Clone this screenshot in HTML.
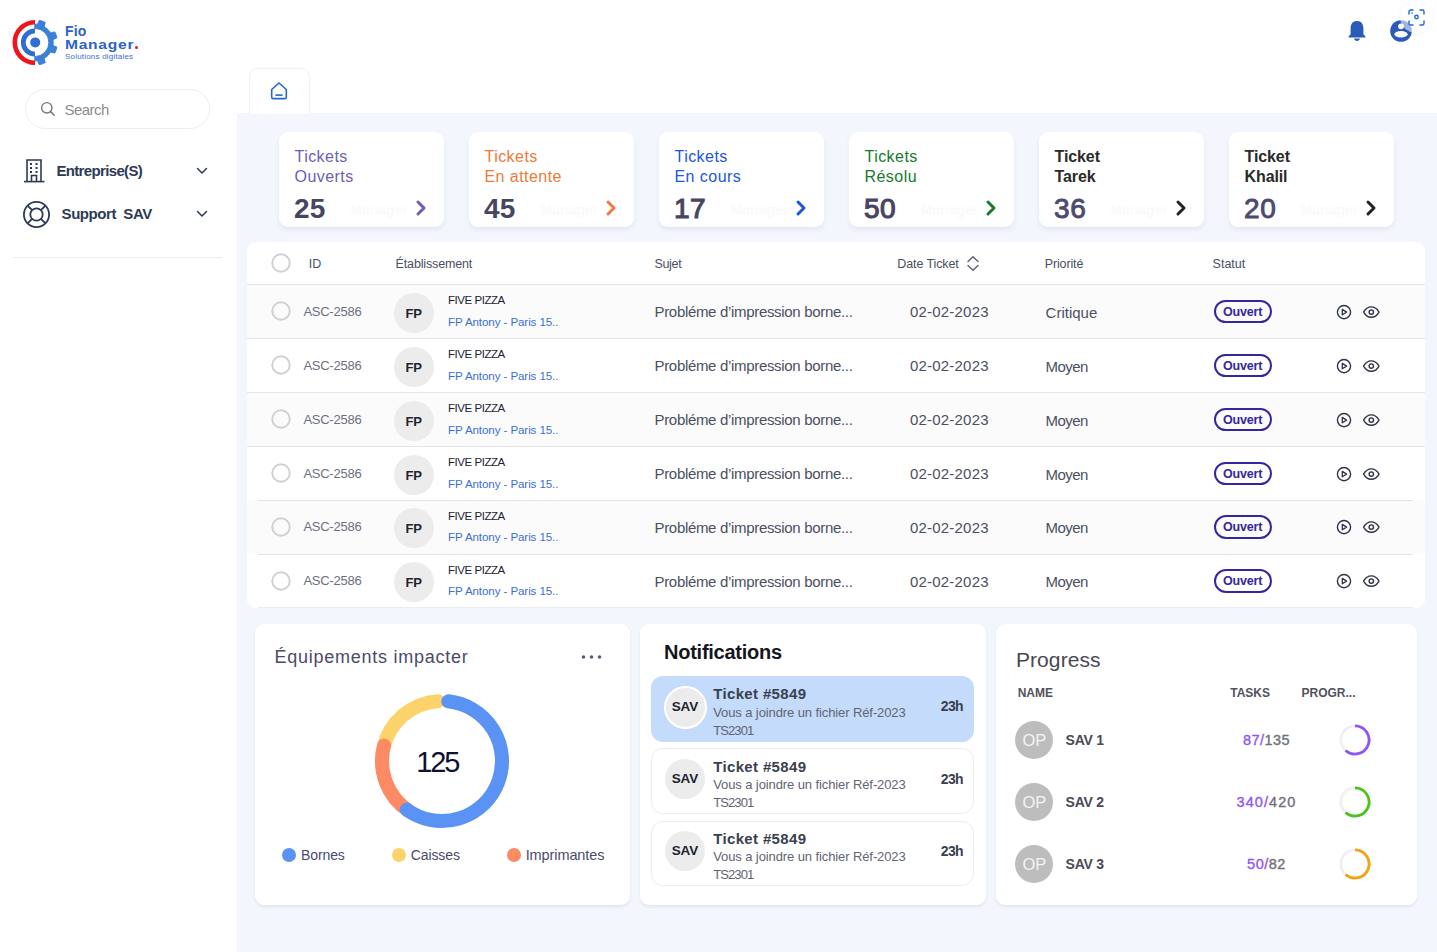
<!DOCTYPE html>
<html><head><meta charset="utf-8">
<style>
*{box-sizing:border-box;margin:0;padding:0}
html,body{width:1437px;height:952px;overflow:hidden;background:#fff;font-family:"Liberation Sans",sans-serif;position:relative}
.a{position:absolute;white-space:nowrap;line-height:1}
.card{position:absolute;background:#fff;border-radius:9px;box-shadow:0 3px 5px rgba(40,50,90,0.07)}
</style></head><body>
<!-- main bg -->
<div class="a" style="left:237px;top:113px;width:1200px;height:839px;background:#f3f6fd"></div>

<!-- SIDEBAR -->
<svg class="a" style="left:0;top:0" width="236" height="80" viewBox="0 0 236 80">
  <!-- red arc -->
  <path d="M35 22.3 A20.2 20.2 0 0 0 35 62.7" fill="none" stroke="#f0141e" stroke-width="4.6"/>
  <!-- inner blue arc -->
  <path d="M35 30.8 A11.7 11.7 0 0 0 35 54.2" fill="none" stroke="#2f6fd1" stroke-width="4.8"/>
  <!-- dot -->
  <circle cx="35.2" cy="42.4" r="5" fill="#2f6fd1"/>
  <!-- gear right half -->
  <path fill="#3c7fd8" stroke="#3c7fd8" stroke-width="1" stroke-linejoin="round" d="M34.80 24.10 L35.35 24.11 L35.89 24.13 L36.44 24.17 L36.98 24.23 L37.52 24.30 L39.31 20.35 L40.33 20.59 L41.34 20.87 L42.34 21.20 L43.33 21.57 L44.29 21.99 L45.24 22.45 L44.14 26.65 L45.67 27.65 L47.09 28.80 L48.39 30.09 L49.55 31.50 L50.57 33.02 L54.75 31.89 L55.23 32.83 L55.65 33.79 L56.04 34.77 L56.37 35.77 L56.66 36.78 L56.91 37.80 L52.97 39.62 L53.12 40.77 L53.19 41.92 L53.19 43.08 L53.12 44.23 L52.97 45.38 L56.91 47.20 L56.66 48.22 L56.37 49.23 L56.04 50.23 L55.65 51.21 L55.23 52.17 L54.75 53.11 L50.57 51.98 L49.55 53.50 L48.39 54.91 L47.09 56.20 L45.67 57.35 L44.14 58.35 L45.24 62.55 L44.29 63.01 L43.33 63.43 L42.34 63.80 L41.34 64.13 L40.33 64.41 L39.31 64.65 L37.52 60.70 L36.98 60.77 L36.44 60.83 L35.89 60.87 L35.35 60.89 L34.80 60.90 L34.80 56.60 A14.1 14.1 0 0 0 34.80 28.40 Z"/>
</svg>
<div class="a" style="left:65px;top:23.6px;font-size:14px;font-weight:700;color:#2b63c6;letter-spacing:0.1px">Fio</div>
<div class="a" style="left:65px;top:38px;font-size:13px;font-weight:700;color:#2b63c6;letter-spacing:0.6px;transform:scaleX(1.2);transform-origin:0 0">Manager</div>
<div class="a" style="left:135px;top:46px;width:3px;height:3px;border-radius:50%;background:#f0141e"></div>
<div class="a" style="left:65px;top:52.5px;font-size:8px;color:#3b6fd0;letter-spacing:0.2px">Solutions digitales</div>

<div class="a" style="left:24.5px;top:89.3px;width:185.5px;height:39.7px;border:1px solid #eeeeee;border-radius:20px"></div>
<svg class="a" style="left:40px;top:101.2px" width="16" height="16" viewBox="0 0 16 16"><circle cx="6.8" cy="6.8" r="5.2" fill="none" stroke="#777" stroke-width="1.4"/><path d="M10.6 10.6 L14.2 14.2" stroke="#777" stroke-width="1.5" stroke-linecap="round"/></svg>
<div class="a" style="left:64.4px;top:102.3px;font-size:15px;color:#8c8c8c;letter-spacing:-0.5px">Search</div>

<svg class="a" style="left:23px;top:158px" width="24" height="25" viewBox="0 0 24 25">
  <g fill="none" stroke="#2d3a55" stroke-width="1.6">
    <path d="M4 23.5 V2 H18 V23.5"/><path d="M1 23.6 H21.5"/>
    <path d="M8.5 23.5 V17.5 H13.5 V23.5"/>
  </g>
  <g fill="#2d3a55"><rect x="7" y="5" width="2" height="2"/><rect x="12.5" y="5" width="2" height="2"/><rect x="7" y="9" width="2" height="2"/><rect x="12.5" y="9" width="2" height="2"/><rect x="7" y="13" width="2" height="2"/><rect x="12.5" y="13" width="2" height="2"/></g>
</svg>
<div class="a" style="left:56.4px;top:163.3px;font-size:15px;font-weight:700;color:#2d3a55;letter-spacing:-0.65px">Entreprise(S)</div>
<svg class="a" style="left:195px;top:165px" width="14" height="12" viewBox="0 0 14 12"><path d="M2.5 3.5 L7 8 L11.5 3.5" fill="none" stroke="#2d3a55" stroke-width="1.5" stroke-linecap="round" stroke-linejoin="round"/></svg>

<svg class="a" style="left:22px;top:199.5px" width="29" height="29" viewBox="0 0 29 29">
  <g fill="none" stroke="#2d3a55" stroke-width="1.8">
    <circle cx="14.5" cy="14.5" r="12.6"/><circle cx="14.5" cy="14.5" r="6.2"/>
    <path d="M5.6 5.6 L10.1 10.1 M23.4 5.6 L18.9 10.1 M5.6 23.4 L10.1 18.9 M23.4 23.4 L18.9 18.9"/>
  </g>
</svg>
<div class="a" style="left:61.6px;top:206.3px;font-size:15px;font-weight:700;color:#2d3a55;letter-spacing:-0.45px">Support&nbsp; SAV</div>
<svg class="a" style="left:195px;top:208px" width="14" height="12" viewBox="0 0 14 12"><path d="M2.5 3.5 L7 8 L11.5 3.5" fill="none" stroke="#2d3a55" stroke-width="1.5" stroke-linecap="round" stroke-linejoin="round"/></svg>
<div class="a" style="left:13px;top:256.5px;width:209px;height:1.2px;background:#ebebeb"></div>

<!-- HEADER ICONS -->
<svg class="a" style="left:1346px;top:19px" width="22" height="24" viewBox="0 0 22 24">
  <path d="M11 2 C6.3 2 4.6 5.6 4.6 9.6 V15.3 L2.6 17.6 V18.6 H19.4 V17.6 L17.4 15.3 V9.6 C17.4 5.6 15.7 2 11 2 Z" fill="#2a5bb8"/>
  <path d="M8 19.6 H14 C13.6 21.2 12.5 22 11 22 C9.5 22 8.4 21.2 8 19.6 Z" fill="#2a5bb8"/>
</svg>
<svg class="a" style="left:1389px;top:19px" width="24" height="24" viewBox="0 0 24 24">
  <circle cx="12" cy="12" r="10.8" fill="#2a5bb8"/>
  <circle cx="12" cy="7.3" r="2.9" fill="#fff"/>
  <ellipse cx="12" cy="15.3" rx="6.6" ry="3.2" fill="#fff"/>
</svg>
<div class="a" style="left:1400px;top:1px;width:32px;height:32px;border-radius:50%;background:rgba(255,255,255,0.55);box-shadow:0 1px 4px rgba(0,0,0,0.06)"></div>
<svg class="a" style="left:1408px;top:8.5px" width="17" height="17" viewBox="0 0 17 17">
  <g fill="none" stroke="#1f6ad1" stroke-width="1.4" stroke-linecap="round">
    <path d="M1 5 V2.6 C1 1.7 1.7 1 2.6 1 H5 M12 1 H14.4 C15.3 1 16 1.7 16 2.6 V5 M16 12 V14.4 C16 15.3 15.3 16 14.4 16 H12 M5 16 H2.6 C1.7 16 1 15.3 1 14.4 V12"/>
    <circle cx="8.5" cy="8" r="1.7"/>
  </g>
  <circle cx="4.1" cy="4.1" r="0.8" fill="#1f6ad1"/>
</svg>

<!-- HOME TAB -->
<div class="a" style="left:248.5px;top:67.5px;width:61px;height:46px;background:#fff;border:1px solid #f2f2f2;border-bottom:none;border-radius:9px 9px 0 0;box-shadow:0 -1px 2px rgba(0,0,0,0.025)"></div>
<svg class="a" style="left:270px;top:81px" width="18" height="19" viewBox="0 0 18 19">
  <path d="M1.7 8.5 L9 2 L16.3 8.5 V16.2 C16.3 17 15.7 17.6 14.9 17.6 H3.1 C2.3 17.6 1.7 17 1.7 16.2 Z" fill="none" stroke="#2566cf" stroke-width="1.6" stroke-linejoin="round"/>
  <path d="M5.4 14.1 H12.6" stroke="#2566cf" stroke-width="1.6"/>
</svg>

<!--CARDS-->
<div class="card" style="left:278.5px;top:132px;width:165px;height:95px"></div>
<div class="a" style="left:294.5px;top:146.6px;font-size:16px;color:#6b5fb8;line-height:20px;letter-spacing:0.45px;">Tickets<br>Ouverts</div>
<div class="a" style="left:350.5px;top:203px;font-size:14px;font-weight:700;color:#fafafc">Manager</div>
<div class="a" style="left:294.0px;top:194.7px;font-size:28px;font-weight:700;color:#464562;letter-spacing:0.3px">25</div>
<svg class="a" style="left:413.5px;top:199px" width="15" height="18" viewBox="0 0 15 18"><path d="M4 3 L10 9 L4 15" fill="none" stroke="#6b5fb8" stroke-width="3" stroke-linecap="round" stroke-linejoin="round"/></svg>
<div class="card" style="left:468.5px;top:132px;width:165px;height:95px"></div>
<div class="a" style="left:484.5px;top:146.6px;font-size:16px;color:#f07a3a;line-height:20px;letter-spacing:0.45px;">Tickets<br>En attente</div>
<div class="a" style="left:540.5px;top:203px;font-size:14px;font-weight:700;color:#fafafc">Manager</div>
<div class="a" style="left:484.0px;top:194.7px;font-size:28px;font-weight:700;color:#464562;letter-spacing:0.3px">45</div>
<svg class="a" style="left:603.5px;top:199px" width="15" height="18" viewBox="0 0 15 18"><path d="M4 3 L10 9 L4 15" fill="none" stroke="#f07a3a" stroke-width="3" stroke-linecap="round" stroke-linejoin="round"/></svg>
<div class="card" style="left:658.5px;top:132px;width:165px;height:95px"></div>
<div class="a" style="left:674.5px;top:146.6px;font-size:16px;color:#1d55e0;line-height:20px;letter-spacing:0.45px;">Tickets<br>En cours</div>
<div class="a" style="left:730.5px;top:203px;font-size:14px;font-weight:700;color:#fafafc">Manager</div>
<div class="a" style="left:674.0px;top:194.7px;font-size:28px;font-weight:400;-webkit-text-stroke:1.1px #464562;color:#464562;letter-spacing:0.4px">17</div>
<svg class="a" style="left:793.5px;top:199px" width="15" height="18" viewBox="0 0 15 18"><path d="M4 3 L10 9 L4 15" fill="none" stroke="#1d55e0" stroke-width="3" stroke-linecap="round" stroke-linejoin="round"/></svg>
<div class="card" style="left:848.5px;top:132px;width:165px;height:95px"></div>
<div class="a" style="left:864.5px;top:146.6px;font-size:16px;color:#157a2c;line-height:20px;letter-spacing:0.45px;">Tickets<br>Résolu</div>
<div class="a" style="left:920.5px;top:203px;font-size:14px;font-weight:700;color:#fafafc">Manager</div>
<div class="a" style="left:864.0px;top:194.7px;font-size:28px;font-weight:400;-webkit-text-stroke:1.1px #464562;color:#464562;letter-spacing:0.4px">50</div>
<svg class="a" style="left:983.5px;top:199px" width="15" height="18" viewBox="0 0 15 18"><path d="M4 3 L10 9 L4 15" fill="none" stroke="#157a2c" stroke-width="3" stroke-linecap="round" stroke-linejoin="round"/></svg>
<div class="card" style="left:1038.5px;top:132px;width:165px;height:95px"></div>
<div class="a" style="left:1054.5px;top:146.6px;font-size:16px;color:#2a2a2a;line-height:20px;font-weight:700;letter-spacing:-0.1px;">Ticket<br>Tarek</div>
<div class="a" style="left:1110.5px;top:203px;font-size:14px;font-weight:700;color:#fafafc">Manager</div>
<div class="a" style="left:1054.0px;top:194.7px;font-size:28px;font-weight:400;-webkit-text-stroke:0.9px #4c4a72;color:#4c4a72;letter-spacing:0.6px">36</div>
<svg class="a" style="left:1173.5px;top:199px" width="15" height="18" viewBox="0 0 15 18"><path d="M4 3 L10 9 L4 15" fill="none" stroke="#222" stroke-width="3" stroke-linecap="round" stroke-linejoin="round"/></svg>
<div class="card" style="left:1228.5px;top:132px;width:165px;height:95px"></div>
<div class="a" style="left:1244.5px;top:146.6px;font-size:16px;color:#2a2a2a;line-height:20px;font-weight:700;letter-spacing:-0.1px;">Ticket<br>Khalil</div>
<div class="a" style="left:1300.5px;top:203px;font-size:14px;font-weight:700;color:#fafafc">Manager</div>
<div class="a" style="left:1244.0px;top:194.7px;font-size:28px;font-weight:400;-webkit-text-stroke:0.9px #4c4a72;color:#4c4a72;letter-spacing:0.6px">20</div>
<svg class="a" style="left:1363.5px;top:199px" width="15" height="18" viewBox="0 0 15 18"><path d="M4 3 L10 9 L4 15" fill="none" stroke="#222" stroke-width="3" stroke-linecap="round" stroke-linejoin="round"/></svg>
<div class="a" style="left:247px;top:242px;width:1178px;height:366px;background:#fff;border-radius:9px;overflow:hidden">
<div class="a" style="left:0;top:43px;width:1178px;height:53.5px;background:#fbfbfc"></div>
<div class="a" style="left:0;top:96.5px;width:1178px;height:54.0px;background:#fff"></div>
<div class="a" style="left:0;top:150.5px;width:1178px;height:54.0px;background:#fbfbfc"></div>
<div class="a" style="left:0;top:204.5px;width:1178px;height:53.5px;background:#fff"></div>
<div class="a" style="left:0;top:258px;width:1178px;height:54px;background:#fbfbfc"></div>
<div class="a" style="left:0;top:312px;width:1178px;height:54px;background:#fff"></div>
<div class="a" style="left:0;top:42.0px;width:1178px;height:1px;background:#e4e5ec"></div>
<div class="a" style="left:0;top:95.69999999999999px;width:1178px;height:1px;background:#e4e5ec"></div>
<div class="a" style="left:0;top:150.0px;width:1178px;height:1px;background:#e4e5ec"></div>
<div class="a" style="left:0;top:203.89999999999998px;width:1178px;height:1px;background:#e4e5ec"></div>
<div class="a" style="left:11px;top:257.7px;width:1155px;height:1px;background:#e4e5ec"></div>
<div class="a" style="left:11px;top:311.70000000000005px;width:1155px;height:1px;background:#e4e5ec"></div>
<div class="a" style="left:11px;top:364.5px;width:1155px;height:1px;background:#ebebf0"></div>
</div>
<svg class="a" style="left:269px;top:251px" width="24" height="24" viewBox="0 0 24 24"><circle cx="12" cy="12" r="8.75" fill="none" stroke="#cfd0d4" stroke-width="1.9"/></svg>
<div class="a" style="left:308.75px;top:258.42px;font-size:12.5px;color:#4a4f63;">ID</div>
<div class="a" style="left:395.6px;top:258.42px;font-size:12.5px;color:#4a4f63;letter-spacing:-0.15px">Établissement</div>
<div class="a" style="left:654.4px;top:258.42px;font-size:12.5px;color:#4a4f63;letter-spacing:-0.3px">Sujet</div>
<div class="a" style="left:897.3px;top:258.42px;font-size:12.5px;color:#4a4f63;letter-spacing:-0.1px">Date Ticket</div>
<svg class="a" style="left:965px;top:255px" width="16" height="17" viewBox="0 0 16 17"><path d="M3 6.5 L8 1.8 L13 6.5 M3 10.5 L8 15.2 L13 10.5" fill="none" stroke="#5a5f73" stroke-width="1.4" stroke-linecap="round" stroke-linejoin="round"/></svg>
<div class="a" style="left:1044.8px;top:258.42px;font-size:12.5px;color:#4a4f63;letter-spacing:-0.15px">Priorité</div>
<div class="a" style="left:1212.6px;top:258.42px;font-size:12.5px;color:#4a4f63;">Statut</div>
<svg class="a" style="left:269px;top:299.3px" width="24" height="24" viewBox="0 0 24 24"><circle cx="12" cy="12" r="8.75" fill="none" stroke="#cfd0d4" stroke-width="1.9"/></svg>
<div class="a" style="left:303.4px;top:304.99px;font-size:13px;color:#6b7080;letter-spacing:-0.25px">ASC-2586</div>
<div class="a" style="left:393.8px;top:292.8px;width:40px;height:40px;border-radius:50%;background:#ececec"></div>
<div class="a" style="left:405.4px;top:306.99px;font-size:13px;color:#1f2230;font-weight:700">FP</div>
<div class="a" style="left:448px;top:295.36px;font-size:11.5px;color:#1f2230;letter-spacing:-0.45px">FIVE PIZZA</div>
<div class="a" style="left:448px;top:315.68px;font-size:11.6px;color:#3b6fd6;letter-spacing:-0.1px">FP Antony - Paris 15..</div>
<div class="a" style="left:654.5px;top:304.30px;font-size:15px;color:#4b5060;letter-spacing:-0.32px">Probléme d’impression borne...</div>
<div class="a" style="left:910px;top:304.30px;font-size:15px;color:#4b5060;letter-spacing:0.2px">02-02-2023</div>
<div class="a" style="left:1045.6px;top:304.70px;font-size:15px;color:#4b5060;">Critique</div>
<div class="a" style="left:1214px;top:299.5px;width:57.6px;height:23.5px;border:2px solid #3327a0;border-radius:12px"></div>
<div class="a" style="left:1223px;top:305.62px;font-size:12.5px;color:#3327a0;font-weight:700;letter-spacing:-0.2px">Ouvert</div>
<svg class="a" style="left:1336px;top:303.5px" width="17" height="17" viewBox="0 0 17 17"><circle cx="8" cy="8.1" r="6.6" fill="none" stroke="#2f3447" stroke-width="1.4"/><path d="M6.3 5.4 L10.6 8.1 L6.3 10.8 Z" fill="none" stroke="#2f3447" stroke-width="1.3" stroke-linejoin="round"/></svg>
<svg class="a" style="left:1361.5px;top:303.5px" width="19" height="17" viewBox="0 0 19 17"><path d="M1.6 8.1 C3.6 4.6 6.3 2.9 9.3 2.9 C12.3 2.9 15 4.6 17 8.1 C15 11.6 12.3 13.3 9.3 13.3 C6.3 13.3 3.6 11.6 1.6 8.1 Z" fill="none" stroke="#2f3447" stroke-width="1.4" stroke-linejoin="round"/><circle cx="9.3" cy="8.1" r="2.2" fill="none" stroke="#2f3447" stroke-width="1.4"/></svg>
<svg class="a" style="left:269px;top:353.3px" width="24" height="24" viewBox="0 0 24 24"><circle cx="12" cy="12" r="8.75" fill="none" stroke="#cfd0d4" stroke-width="1.9"/></svg>
<div class="a" style="left:303.4px;top:358.99px;font-size:13px;color:#6b7080;letter-spacing:-0.25px">ASC-2586</div>
<div class="a" style="left:393.8px;top:346.8px;width:40px;height:40px;border-radius:50%;background:#ececec"></div>
<div class="a" style="left:405.4px;top:360.99px;font-size:13px;color:#1f2230;font-weight:700">FP</div>
<div class="a" style="left:448px;top:349.36px;font-size:11.5px;color:#1f2230;letter-spacing:-0.45px">FIVE PIZZA</div>
<div class="a" style="left:448px;top:369.68px;font-size:11.6px;color:#3b6fd6;letter-spacing:-0.1px">FP Antony - Paris 15..</div>
<div class="a" style="left:654.5px;top:358.30px;font-size:15px;color:#4b5060;letter-spacing:-0.32px">Probléme d’impression borne...</div>
<div class="a" style="left:910px;top:358.30px;font-size:15px;color:#4b5060;letter-spacing:0.2px">02-02-2023</div>
<div class="a" style="left:1045.6px;top:358.70px;font-size:15px;color:#4b5060;letter-spacing:-0.55px">Moyen</div>
<div class="a" style="left:1214px;top:353.5px;width:57.6px;height:23.5px;border:2px solid #3327a0;border-radius:12px"></div>
<div class="a" style="left:1223px;top:359.62px;font-size:12.5px;color:#3327a0;font-weight:700;letter-spacing:-0.2px">Ouvert</div>
<svg class="a" style="left:1336px;top:357.5px" width="17" height="17" viewBox="0 0 17 17"><circle cx="8" cy="8.1" r="6.6" fill="none" stroke="#2f3447" stroke-width="1.4"/><path d="M6.3 5.4 L10.6 8.1 L6.3 10.8 Z" fill="none" stroke="#2f3447" stroke-width="1.3" stroke-linejoin="round"/></svg>
<svg class="a" style="left:1361.5px;top:357.5px" width="19" height="17" viewBox="0 0 19 17"><path d="M1.6 8.1 C3.6 4.6 6.3 2.9 9.3 2.9 C12.3 2.9 15 4.6 17 8.1 C15 11.6 12.3 13.3 9.3 13.3 C6.3 13.3 3.6 11.6 1.6 8.1 Z" fill="none" stroke="#2f3447" stroke-width="1.4" stroke-linejoin="round"/><circle cx="9.3" cy="8.1" r="2.2" fill="none" stroke="#2f3447" stroke-width="1.4"/></svg>
<svg class="a" style="left:269px;top:407.3px" width="24" height="24" viewBox="0 0 24 24"><circle cx="12" cy="12" r="8.75" fill="none" stroke="#cfd0d4" stroke-width="1.9"/></svg>
<div class="a" style="left:303.4px;top:412.99px;font-size:13px;color:#6b7080;letter-spacing:-0.25px">ASC-2586</div>
<div class="a" style="left:393.8px;top:400.8px;width:40px;height:40px;border-radius:50%;background:#ececec"></div>
<div class="a" style="left:405.4px;top:414.99px;font-size:13px;color:#1f2230;font-weight:700">FP</div>
<div class="a" style="left:448px;top:403.36px;font-size:11.5px;color:#1f2230;letter-spacing:-0.45px">FIVE PIZZA</div>
<div class="a" style="left:448px;top:423.68px;font-size:11.6px;color:#3b6fd6;letter-spacing:-0.1px">FP Antony - Paris 15..</div>
<div class="a" style="left:654.5px;top:412.30px;font-size:15px;color:#4b5060;letter-spacing:-0.32px">Probléme d’impression borne...</div>
<div class="a" style="left:910px;top:412.30px;font-size:15px;color:#4b5060;letter-spacing:0.2px">02-02-2023</div>
<div class="a" style="left:1045.6px;top:412.70px;font-size:15px;color:#4b5060;letter-spacing:-0.55px">Moyen</div>
<div class="a" style="left:1214px;top:407.5px;width:57.6px;height:23.5px;border:2px solid #3327a0;border-radius:12px"></div>
<div class="a" style="left:1223px;top:413.62px;font-size:12.5px;color:#3327a0;font-weight:700;letter-spacing:-0.2px">Ouvert</div>
<svg class="a" style="left:1336px;top:411.5px" width="17" height="17" viewBox="0 0 17 17"><circle cx="8" cy="8.1" r="6.6" fill="none" stroke="#2f3447" stroke-width="1.4"/><path d="M6.3 5.4 L10.6 8.1 L6.3 10.8 Z" fill="none" stroke="#2f3447" stroke-width="1.3" stroke-linejoin="round"/></svg>
<svg class="a" style="left:1361.5px;top:411.5px" width="19" height="17" viewBox="0 0 19 17"><path d="M1.6 8.1 C3.6 4.6 6.3 2.9 9.3 2.9 C12.3 2.9 15 4.6 17 8.1 C15 11.6 12.3 13.3 9.3 13.3 C6.3 13.3 3.6 11.6 1.6 8.1 Z" fill="none" stroke="#2f3447" stroke-width="1.4" stroke-linejoin="round"/><circle cx="9.3" cy="8.1" r="2.2" fill="none" stroke="#2f3447" stroke-width="1.4"/></svg>
<svg class="a" style="left:269px;top:461.3px" width="24" height="24" viewBox="0 0 24 24"><circle cx="12" cy="12" r="8.75" fill="none" stroke="#cfd0d4" stroke-width="1.9"/></svg>
<div class="a" style="left:303.4px;top:466.99px;font-size:13px;color:#6b7080;letter-spacing:-0.25px">ASC-2586</div>
<div class="a" style="left:393.8px;top:454.8px;width:40px;height:40px;border-radius:50%;background:#ececec"></div>
<div class="a" style="left:405.4px;top:468.99px;font-size:13px;color:#1f2230;font-weight:700">FP</div>
<div class="a" style="left:448px;top:457.36px;font-size:11.5px;color:#1f2230;letter-spacing:-0.45px">FIVE PIZZA</div>
<div class="a" style="left:448px;top:477.68px;font-size:11.6px;color:#3b6fd6;letter-spacing:-0.1px">FP Antony - Paris 15..</div>
<div class="a" style="left:654.5px;top:466.30px;font-size:15px;color:#4b5060;letter-spacing:-0.32px">Probléme d’impression borne...</div>
<div class="a" style="left:910px;top:466.30px;font-size:15px;color:#4b5060;letter-spacing:0.2px">02-02-2023</div>
<div class="a" style="left:1045.6px;top:466.70px;font-size:15px;color:#4b5060;letter-spacing:-0.55px">Moyen</div>
<div class="a" style="left:1214px;top:461.5px;width:57.6px;height:23.5px;border:2px solid #3327a0;border-radius:12px"></div>
<div class="a" style="left:1223px;top:467.62px;font-size:12.5px;color:#3327a0;font-weight:700;letter-spacing:-0.2px">Ouvert</div>
<svg class="a" style="left:1336px;top:465.5px" width="17" height="17" viewBox="0 0 17 17"><circle cx="8" cy="8.1" r="6.6" fill="none" stroke="#2f3447" stroke-width="1.4"/><path d="M6.3 5.4 L10.6 8.1 L6.3 10.8 Z" fill="none" stroke="#2f3447" stroke-width="1.3" stroke-linejoin="round"/></svg>
<svg class="a" style="left:1361.5px;top:465.5px" width="19" height="17" viewBox="0 0 19 17"><path d="M1.6 8.1 C3.6 4.6 6.3 2.9 9.3 2.9 C12.3 2.9 15 4.6 17 8.1 C15 11.6 12.3 13.3 9.3 13.3 C6.3 13.3 3.6 11.6 1.6 8.1 Z" fill="none" stroke="#2f3447" stroke-width="1.4" stroke-linejoin="round"/><circle cx="9.3" cy="8.1" r="2.2" fill="none" stroke="#2f3447" stroke-width="1.4"/></svg>
<svg class="a" style="left:269px;top:514.8px" width="24" height="24" viewBox="0 0 24 24"><circle cx="12" cy="12" r="8.75" fill="none" stroke="#cfd0d4" stroke-width="1.9"/></svg>
<div class="a" style="left:303.4px;top:520.49px;font-size:13px;color:#6b7080;letter-spacing:-0.25px">ASC-2586</div>
<div class="a" style="left:393.8px;top:508.3px;width:40px;height:40px;border-radius:50%;background:#ececec"></div>
<div class="a" style="left:405.4px;top:522.49px;font-size:13px;color:#1f2230;font-weight:700">FP</div>
<div class="a" style="left:448px;top:510.86px;font-size:11.5px;color:#1f2230;letter-spacing:-0.45px">FIVE PIZZA</div>
<div class="a" style="left:448px;top:531.18px;font-size:11.6px;color:#3b6fd6;letter-spacing:-0.1px">FP Antony - Paris 15..</div>
<div class="a" style="left:654.5px;top:519.80px;font-size:15px;color:#4b5060;letter-spacing:-0.32px">Probléme d’impression borne...</div>
<div class="a" style="left:910px;top:519.80px;font-size:15px;color:#4b5060;letter-spacing:0.2px">02-02-2023</div>
<div class="a" style="left:1045.6px;top:520.20px;font-size:15px;color:#4b5060;letter-spacing:-0.55px">Moyen</div>
<div class="a" style="left:1214px;top:515.0px;width:57.6px;height:23.5px;border:2px solid #3327a0;border-radius:12px"></div>
<div class="a" style="left:1223px;top:521.12px;font-size:12.5px;color:#3327a0;font-weight:700;letter-spacing:-0.2px">Ouvert</div>
<svg class="a" style="left:1336px;top:519.0px" width="17" height="17" viewBox="0 0 17 17"><circle cx="8" cy="8.1" r="6.6" fill="none" stroke="#2f3447" stroke-width="1.4"/><path d="M6.3 5.4 L10.6 8.1 L6.3 10.8 Z" fill="none" stroke="#2f3447" stroke-width="1.3" stroke-linejoin="round"/></svg>
<svg class="a" style="left:1361.5px;top:519.0px" width="19" height="17" viewBox="0 0 19 17"><path d="M1.6 8.1 C3.6 4.6 6.3 2.9 9.3 2.9 C12.3 2.9 15 4.6 17 8.1 C15 11.6 12.3 13.3 9.3 13.3 C6.3 13.3 3.6 11.6 1.6 8.1 Z" fill="none" stroke="#2f3447" stroke-width="1.4" stroke-linejoin="round"/><circle cx="9.3" cy="8.1" r="2.2" fill="none" stroke="#2f3447" stroke-width="1.4"/></svg>
<svg class="a" style="left:269px;top:568.8px" width="24" height="24" viewBox="0 0 24 24"><circle cx="12" cy="12" r="8.75" fill="none" stroke="#cfd0d4" stroke-width="1.9"/></svg>
<div class="a" style="left:303.4px;top:574.49px;font-size:13px;color:#6b7080;letter-spacing:-0.25px">ASC-2586</div>
<div class="a" style="left:393.8px;top:562.3px;width:40px;height:40px;border-radius:50%;background:#ececec"></div>
<div class="a" style="left:405.4px;top:576.49px;font-size:13px;color:#1f2230;font-weight:700">FP</div>
<div class="a" style="left:448px;top:564.86px;font-size:11.5px;color:#1f2230;letter-spacing:-0.45px">FIVE PIZZA</div>
<div class="a" style="left:448px;top:585.18px;font-size:11.6px;color:#3b6fd6;letter-spacing:-0.1px">FP Antony - Paris 15..</div>
<div class="a" style="left:654.5px;top:573.80px;font-size:15px;color:#4b5060;letter-spacing:-0.32px">Probléme d’impression borne...</div>
<div class="a" style="left:910px;top:573.80px;font-size:15px;color:#4b5060;letter-spacing:0.2px">02-02-2023</div>
<div class="a" style="left:1045.6px;top:574.20px;font-size:15px;color:#4b5060;letter-spacing:-0.55px">Moyen</div>
<div class="a" style="left:1214px;top:569.0px;width:57.6px;height:23.5px;border:2px solid #3327a0;border-radius:12px"></div>
<div class="a" style="left:1223px;top:575.12px;font-size:12.5px;color:#3327a0;font-weight:700;letter-spacing:-0.2px">Ouvert</div>
<svg class="a" style="left:1336px;top:573.0px" width="17" height="17" viewBox="0 0 17 17"><circle cx="8" cy="8.1" r="6.6" fill="none" stroke="#2f3447" stroke-width="1.4"/><path d="M6.3 5.4 L10.6 8.1 L6.3 10.8 Z" fill="none" stroke="#2f3447" stroke-width="1.3" stroke-linejoin="round"/></svg>
<svg class="a" style="left:1361.5px;top:573.0px" width="19" height="17" viewBox="0 0 19 17"><path d="M1.6 8.1 C3.6 4.6 6.3 2.9 9.3 2.9 C12.3 2.9 15 4.6 17 8.1 C15 11.6 12.3 13.3 9.3 13.3 C6.3 13.3 3.6 11.6 1.6 8.1 Z" fill="none" stroke="#2f3447" stroke-width="1.4" stroke-linejoin="round"/><circle cx="9.3" cy="8.1" r="2.2" fill="none" stroke="#2f3447" stroke-width="1.4"/></svg>
<div class="card" style="left:254.7px;top:623.8px;width:374.9px;height:281.2px;border-radius:9px;box-shadow:0 1.5px 3px rgba(40,50,90,0.08)"></div>
<div class="card" style="left:639.7px;top:623.8px;width:345.9px;height:281.2px;border-radius:9px;box-shadow:0 1.5px 3px rgba(40,50,90,0.08)"></div>
<div class="card" style="left:995.7px;top:623.8px;width:421.5px;height:281.2px;border-radius:9px;box-shadow:0 1.5px 3px rgba(40,50,90,0.08)"></div>
<div class="a" style="left:274.5px;top:647.76px;font-size:18px;color:#4b4a6b;letter-spacing:0.75px">Équipements impacter</div>
<svg class="a" style="left:580px;top:652px" width="23" height="10" viewBox="0 0 23 10"><circle cx="3.5" cy="5" r="1.8" fill="#5a5a72"/><circle cx="11.5" cy="5" r="1.8" fill="#5a5a72"/><circle cx="19.5" cy="5" r="1.8" fill="#5a5a72"/></svg>
<svg class="a" style="left:372.4px;top:691.2px" width="140" height="140" viewBox="0 0 140 140"><path d="M11.54 56.50 A60 60 0 0 1 65.81 10.15" fill="none" stroke="#fcd36b" stroke-width="14" stroke-linecap="round"/><path d="M36.45 119.74 A60 60 0 0 1 12.04 54.47" fill="none" stroke="#fb8a65" stroke-width="14" stroke-linecap="round"/><path d="M76.27 10.33 A60 60 0 1 1 34.73 118.54" fill="none" stroke="#5b93f5" stroke-width="14" stroke-linecap="round"/></svg>
<div class="a" style="left:416.3px;top:747.95px;font-size:29px;color:#0e1130;letter-spacing:-2.2px">125</div>
<div class="a" style="left:281.5px;top:848px;width:14.2px;height:14.2px;border-radius:50%;background:#5b93f5"></div>
<div class="a" style="left:301px;top:848.15px;font-size:14px;color:#4b4a6b;letter-spacing:-0.1px">Bornes</div>
<div class="a" style="left:391.8px;top:848px;width:14.2px;height:14.2px;border-radius:50%;background:#fcd36b"></div>
<div class="a" style="left:410.7px;top:848.15px;font-size:14px;color:#4b4a6b;letter-spacing:-0.1px">Caisses</div>
<div class="a" style="left:506.8px;top:848px;width:14.2px;height:14.2px;border-radius:50%;background:#fb8a65"></div>
<div class="a" style="left:525.7px;top:847.72px;font-size:14.5px;color:#4b4a6b;letter-spacing:-0.1px">Imprimantes</div>
<div class="a" style="left:664px;top:642.17px;font-size:20px;color:#15161c;font-weight:700;letter-spacing:-0.25px">Notifications</div>
<div class="a" style="left:651.4px;top:676px;width:322.5px;height:66.0px;border-radius:12px;background:#c4dbfb"></div>
<div class="a" style="left:663.5px;top:685.5px;width:43px;height:43px;border-radius:50%;background:#ececec;border:2px solid #fff"></div>
<div class="a" style="left:671.8px;top:699.87px;font-size:13.5px;color:#1f2230;font-weight:700;letter-spacing:-0.2px">SAV</div>
<div class="a" style="left:713.2px;top:686.30px;font-size:15px;color:#3a3f50;font-weight:700;letter-spacing:0.35px">Ticket #5849</div>
<div class="a" style="left:713.2px;top:705.99px;font-size:13px;color:#5f6472;letter-spacing:-0.1px">Vous a joindre un fichier Réf-2023</div>
<div class="a" style="left:713.2px;top:723.89px;font-size:13px;color:#5f6472;letter-spacing:-0.9px">TS2301</div>
<div class="a" style="left:940.8px;top:699.25px;font-size:14px;color:#3a3f50;font-weight:700;letter-spacing:-0.7px">23h</div>
<div class="a" style="left:651.4px;top:748.4px;width:322.5px;height:65.2px;border-radius:12px;border:1px solid #ececee"></div>
<div class="a" style="left:665px;top:759.0px;width:40px;height:40px;border-radius:50%;background:#ececec"></div>
<div class="a" style="left:671.8px;top:772.27px;font-size:13.5px;color:#1f2230;font-weight:700;letter-spacing:-0.2px">SAV</div>
<div class="a" style="left:713.2px;top:758.70px;font-size:15px;color:#3a3f50;font-weight:700;letter-spacing:0.35px">Ticket #5849</div>
<div class="a" style="left:713.2px;top:778.39px;font-size:13px;color:#5f6472;letter-spacing:-0.1px">Vous a joindre un fichier Réf-2023</div>
<div class="a" style="left:713.2px;top:796.29px;font-size:13px;color:#5f6472;letter-spacing:-0.9px">TS2301</div>
<div class="a" style="left:940.8px;top:771.65px;font-size:14px;color:#3a3f50;font-weight:700;letter-spacing:-0.7px">23h</div>
<div class="a" style="left:651.4px;top:820.5px;width:322.5px;height:65.0px;border-radius:12px;border:1px solid #ececee"></div>
<div class="a" style="left:665px;top:831.0px;width:40px;height:40px;border-radius:50%;background:#ececec"></div>
<div class="a" style="left:671.8px;top:844.37px;font-size:13.5px;color:#1f2230;font-weight:700;letter-spacing:-0.2px">SAV</div>
<div class="a" style="left:713.2px;top:830.80px;font-size:15px;color:#3a3f50;font-weight:700;letter-spacing:0.35px">Ticket #5849</div>
<div class="a" style="left:713.2px;top:850.49px;font-size:13px;color:#5f6472;letter-spacing:-0.1px">Vous a joindre un fichier Réf-2023</div>
<div class="a" style="left:713.2px;top:868.39px;font-size:13px;color:#5f6472;letter-spacing:-0.9px">TS2301</div>
<div class="a" style="left:940.8px;top:843.75px;font-size:14px;color:#3a3f50;font-weight:700;letter-spacing:-0.7px">23h</div>
<div class="a" style="left:1015.9px;top:649.22px;font-size:21px;color:#494953;letter-spacing:0.1px">Progress</div>
<div class="a" style="left:1017.7px;top:686.84px;font-size:12px;color:#52525c;font-weight:700">NAME</div>
<div class="a" style="left:1230.2px;top:686.84px;font-size:12px;color:#52525c;font-weight:700">TASKS</div>
<div class="a" style="left:1301.5px;top:686.84px;font-size:12px;color:#52525c;font-weight:700">PROGR...</div>
<div class="a" style="left:1015.2px;top:721.2px;width:38px;height:38px;border-radius:50%;background:#bdbdbd"></div>
<div class="a" style="left:1022.5px;top:732.43px;font-size:16.5px;color:#f4f4f4;">OP</div>
<div class="a" style="left:1065.5px;top:733.35px;font-size:14px;color:#4a4a56;font-weight:700;letter-spacing:-0.2px">SAV 1</div>
<div class="a" style="left:1166.5px;top:732.8px;width:200px;text-align:center;font-size:14.5px;color:#707078;-webkit-text-stroke:0.35px #707078;letter-spacing:0.4px"><span style="color:#8f55f6;-webkit-text-stroke:0.35px #8f55f6">87/</span>135</div>
<svg class="a" style="left:1339.4px;top:724.2px" width="32" height="32" viewBox="0 0 32 32"><circle cx="16" cy="16" r="14.1" fill="none" stroke="#efeff5" stroke-width="2.8"/><path d="M16 1.9000000000000004 A14.1 14.1 0 1 1 6.57 26.48" fill="none" stroke="#8f55f6" stroke-width="2.8"/></svg>
<div class="a" style="left:1015.2px;top:783.2px;width:38px;height:38px;border-radius:50%;background:#bdbdbd"></div>
<div class="a" style="left:1022.5px;top:794.43px;font-size:16.5px;color:#f4f4f4;">OP</div>
<div class="a" style="left:1065.5px;top:795.35px;font-size:14px;color:#4a4a56;font-weight:700;letter-spacing:-0.2px">SAV 2</div>
<div class="a" style="left:1166.5px;top:794.8px;width:200px;text-align:center;font-size:14.5px;color:#707078;-webkit-text-stroke:0.35px #707078;letter-spacing:1.05px"><span style="color:#8f55f6;-webkit-text-stroke:0.35px #8f55f6">340/</span>420</div>
<svg class="a" style="left:1339.4px;top:786.2px" width="32" height="32" viewBox="0 0 32 32"><circle cx="16" cy="16" r="14.1" fill="none" stroke="#efeff5" stroke-width="2.8"/><path d="M16 1.9000000000000004 A14.1 14.1 0 1 1 6.57 26.48" fill="none" stroke="#4ac41a" stroke-width="2.8"/></svg>
<div class="a" style="left:1015.2px;top:845.2px;width:38px;height:38px;border-radius:50%;background:#bdbdbd"></div>
<div class="a" style="left:1022.5px;top:856.43px;font-size:16.5px;color:#f4f4f4;">OP</div>
<div class="a" style="left:1065.5px;top:857.35px;font-size:14px;color:#4a4a56;font-weight:700;letter-spacing:-0.2px">SAV 3</div>
<div class="a" style="left:1166.5px;top:856.8px;width:200px;text-align:center;font-size:14.5px;color:#707078;-webkit-text-stroke:0.35px #707078;letter-spacing:0.5px"><span style="color:#8f55f6;-webkit-text-stroke:0.35px #8f55f6">50/</span>82</div>
<svg class="a" style="left:1339.4px;top:848.2px" width="32" height="32" viewBox="0 0 32 32"><circle cx="16" cy="16" r="14.1" fill="none" stroke="#efeff5" stroke-width="2.8"/><path d="M16 1.9000000000000004 A14.1 14.1 0 1 1 6.57 26.48" fill="none" stroke="#f5a30b" stroke-width="2.8"/></svg>
</body></html>
